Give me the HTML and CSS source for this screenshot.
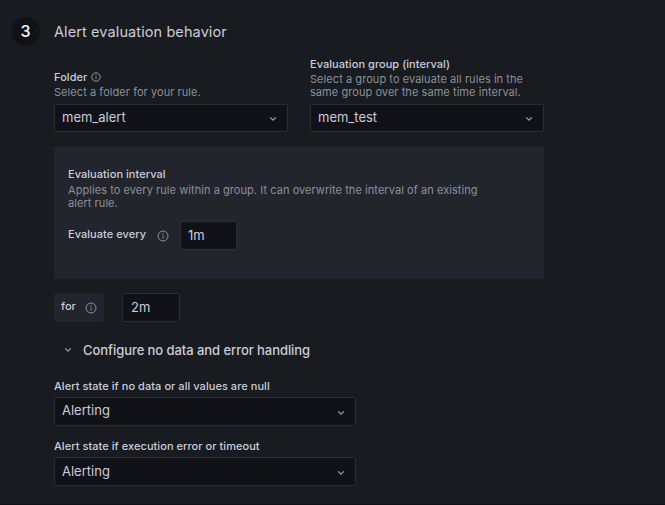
FILE: index.html
```html
<!DOCTYPE html>
<html lang="en">
<head>
<meta charset="utf-8">
<title>Alert evaluation behavior</title>
<link rel="stylesheet" href="styles.css">
</head>
<body>
<svg class="defs" width="0" height="0" aria-hidden="true">
  <symbol id="chevron" viewBox="0 0 8 6"><path d="M1.2 1.4 4 4.2 6.8 1.4"/></symbol>
  <symbol id="info" viewBox="0 0 12 12"><circle cx="6" cy="6" r="5"/><path d="M6 5.4V8.6M6 3.2V4.4"/></symbol>
</svg>
<section class="step">
  <div class="number">3</div>
  <div class="content">
    <h2 class="title">Alert evaluation behavior</h2>
    <div class="fields">
      <div class="field">
        <div class="label">Folder <svg class="info info-small"><use href="#info"/></svg></div>
        <p class="description">Select a folder for your rule.</p>
        <div class="select"><span>mem_alert</span><svg class="chevron"><use href="#chevron"/></svg></div>
      </div>
      <div class="field">
        <div class="label">Evaluation group (interval)</div>
        <p class="description">Select a group to evaluate all rules in the same group over the same time interval.</p>
        <div class="select"><span>mem_test</span><svg class="chevron"><use href="#chevron"/></svg></div>
      </div>
    </div>
    <div class="panel">
      <div class="label">Evaluation interval</div>
      <p class="description">Applies to every rule within a group. It can overwrite the interval of an existing alert rule.</p>
      <div class="every">
        <span class="label every-label">Evaluate every</span>
        <svg class="info"><use href="#info"/></svg>
        <div class="input every-input">1m</div>
      </div>
    </div>
    <div class="for-row">
      <div class="for-label"><span class="label">for</span><svg class="info"><use href="#info"/></svg></div>
      <div class="input">2m</div>
    </div>
    <div class="toggle"><svg class="chevron"><use href="#chevron"/></svg><span>Configure no data and error handling</span></div>
    <div class="state">
      <div class="label state-label">Alert state if no data or all values are null</div>
      <div class="select select-nodata"><span>Alerting</span><svg class="chevron"><use href="#chevron"/></svg></div>
    </div>
    <div class="state">
      <div class="label state-label">Alert state if execution error or timeout</div>
      <div class="select"><span>Alerting</span><svg class="chevron"><use href="#chevron"/></svg></div>
    </div>
  </div>
</section>
</body>
</html>
```

FILE: styles.css
```css
* { box-sizing: border-box; }
body {
  margin: 0;
  height: 505px;
  overflow: hidden;
  background: #181b1f;
  border-bottom: 1px solid #111217;
  color: #ccccdc;
  font-family: Inter, "Liberation Sans", sans-serif;
  font-size: 13px;
}
.defs { position: absolute; }
.step { display: flex; gap: 14px; padding: 17px 0 0 11px; }
.number {
  width: 29px;
  height: 29px;
  border-radius: 50%;
  background: #111217;
  color: #fff;
  font-size: 16px;
  font-weight: 500;
  line-height: 29px;
  text-align: center;
}
.content { width: 490px; }
.title { margin: 0; font-size: 14.5px; font-weight: 400; line-height: 30px; letter-spacing: 0.1px; }
.fields { display: flex; align-items: flex-end; justify-content: space-between; height: 85px; }
.field { width: 234px; }
.label { font-size: 11px; font-weight: 500; line-height: 15px; letter-spacing: 0.05px; white-space: nowrap; }
.description { margin: 0 0 5px; color: #8e8f9b; font-size: 11px; line-height: 13px; letter-spacing: 0.06px; }
.field .description { margin: 1px 0 5px; }
.select {
  display: flex;
  align-items: center;
  justify-content: space-between;
  height: 28px;
  padding: 0 10px 0 7px;
  border: 1px solid #2d2e34;
  border-radius: 2px;
  background: #111217;
}
.select span { line-height: 25px; }
.field .select span { margin-top: -1px; }
.chevron { width: 8px; height: 6px; fill: none; stroke: #9c9daa; stroke-width: 1.3; }
.select .chevron { margin-top: 2px; }
.info { width: 12px; height: 12px; fill: none; stroke: #8e8f9b; stroke-width: 1; }
.info-small { width: 10px; height: 10px; margin-left: 1px; vertical-align: -1px; stroke: #b0b0be; }
.panel { height: 132px; margin-top: 15px; padding: 20px 50px 0 14px; background: #22252b; }
.panel .description { margin: 2px 0 11px; }
.every { display: flex; }
.every-label { width: 89px; padding-top: 6px; }
.every .info { margin-top: 9px; }
.input {
  width: 58px;
  height: 29px;
  padding-left: 8px;
  border: 1px solid #2d2e34;
  border-radius: 2px;
  background: #111217;
  line-height: 27px;
}
.every-input { width: 57px; margin-left: 11px; padding-left: 7px; }
.for-row { display: flex; gap: 18px; margin-top: 14px; }
.for-label {
  display: flex;
  width: 50px;
  height: 29px;
  padding: 6px 7px 0;
  justify-content: space-between;
  border-radius: 2px;
  background: #22252b;
}
.for-label .info { margin-top: 3px; }
.toggle {
  display: flex;
  align-items: center;
  gap: 11px;
  height: 20px;
  margin: 18px 0 19px 10px;
  font-weight: 500;
  letter-spacing: -0.06px;
}
.state { width: 302px; margin-bottom: 13px; }
.state-label { margin-bottom: 3px; }
.state .select { height: 29px; }
.state .select-nodata span { margin-top: -2px; }
```
